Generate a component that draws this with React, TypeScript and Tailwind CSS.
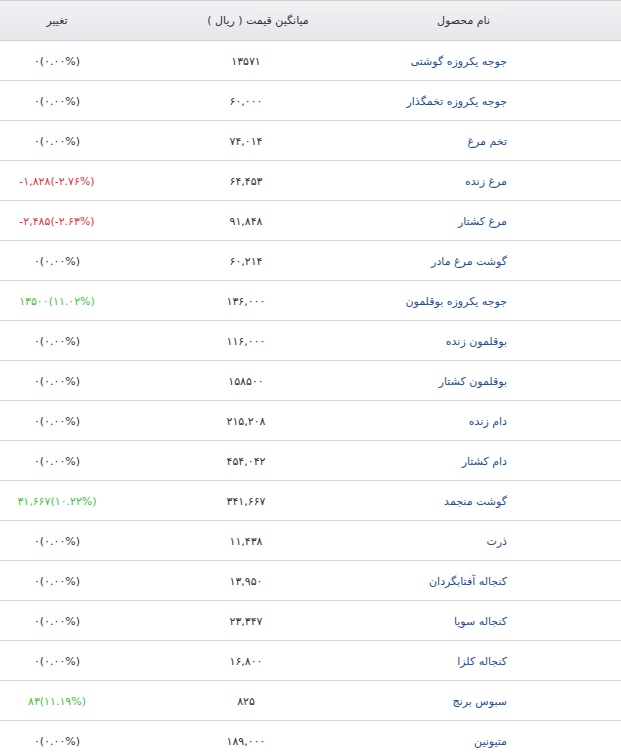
const rows: { name: string; price: string; change: string; tone: "zero" | "down" | "up" }[] = [
  { name: "جوجه یکروزه گوشتی", price: "۱۳۵۷۱", change: "۰(۰.۰۰%)", tone: "zero" },
  { name: "جوجه یکروزه تخمگذار", price: "۶۰,۰۰۰", change: "۰(۰.۰۰%)", tone: "zero" },
  { name: "تخم مرغ", price: "۷۴,۰۱۴", change: "۰(۰.۰۰%)", tone: "zero" },
  { name: "مرغ زنده", price: "۶۴,۴۵۳", change: "-۱,۸۲۸(-۲.۷۶%)", tone: "down" },
  { name: "مرغ کشتار", price: "۹۱,۸۴۸", change: "-۲,۴۸۵(-۲.۶۳%)", tone: "down" },
  { name: "گوشت مرغ مادر", price: "۶۰,۲۱۴", change: "۰(۰.۰۰%)", tone: "zero" },
  { name: "جوجه یکروزه بوقلمون", price: "۱۳۶,۰۰۰", change: "۱۳۵۰۰(۱۱.۰۲%)", tone: "up" },
  { name: "بوقلمون زنده", price: "۱۱۶,۰۰۰", change: "۰(۰.۰۰%)", tone: "zero" },
  { name: "بوقلمون کشتار", price: "۱۵۸۵۰۰", change: "۰(۰.۰۰%)", tone: "zero" },
  { name: "دام زنده", price: "۲۱۵,۲۰۸", change: "۰(۰.۰۰%)", tone: "zero" },
  { name: "دام کشتار", price: "۴۵۴,۰۴۲", change: "۰(۰.۰۰%)", tone: "zero" },
  { name: "گوشت منجمد", price: "۳۴۱,۶۶۷", change: "۳۱,۶۶۷(۱۰.۲۲%)", tone: "up" },
  { name: "ذرت", price: "۱۱,۴۳۸", change: "۰(۰.۰۰%)", tone: "zero" },
  { name: "کنجاله آفتابگردان", price: "۱۳,۹۵۰", change: "۰(۰.۰۰%)", tone: "zero" },
  { name: "کنجاله سویا", price: "۲۳,۳۴۷", change: "۰(۰.۰۰%)", tone: "zero" },
  { name: "کنجاله کلزا", price: "۱۶,۸۰۰", change: "۰(۰.۰۰%)", tone: "zero" },
  { name: "سبوس برنج", price: "۸۲۵", change: "۸۳(۱۱.۱۹%)", tone: "up" },
  { name: "متیونین", price: "۱۸۹,۰۰۰", change: "۰(۰.۰۰%)", tone: "zero" },
]

const toneClass = {
  zero: "text-[#333333]",
  down: "text-[#e3343c]",
  up: "text-[#42c242]",
}

export default function App() {
  return (
    <div className="w-[621px] bg-white text-[11px] font-['DejaVu_Sans',sans-serif]">
      {/* header */}
      <div className="grid h-[41px] grid-cols-[114px_264px_243px] items-center border-t border-b border-[#cfcfd4] bg-gradient-to-b from-[#f2f2f5] to-[#e7e7eb] pt-[2px] text-[#333333]">
        <div className="text-center">تغییر</div>
        <div className="pl-[24px] text-center" dir="rtl">میانگین قیمت ( ریال )</div>
        <div className="pr-[131px] text-right" dir="rtl">نام محصول</div>
      </div>

      {rows.map((row) => (
        <div
          key={row.name}
          className="grid h-[40px] grid-cols-[114px_264px_243px] items-center border-b border-[#d9d9d9] pt-[3px]"
        >
          <div className={`text-center tracking-[0.5px] ${toneClass[row.tone]}`}>
            <bdo dir="ltr">{row.change}</bdo>
          </div>
          <div className="text-center tracking-[0.5px] text-[#333333]">
            <bdo dir="ltr">{row.price}</bdo>
          </div>
          <div className="pr-[114px] text-right text-[#1f4f8f]" dir="rtl">{row.name}</div>
        </div>
      ))}
    </div>
  )
}
